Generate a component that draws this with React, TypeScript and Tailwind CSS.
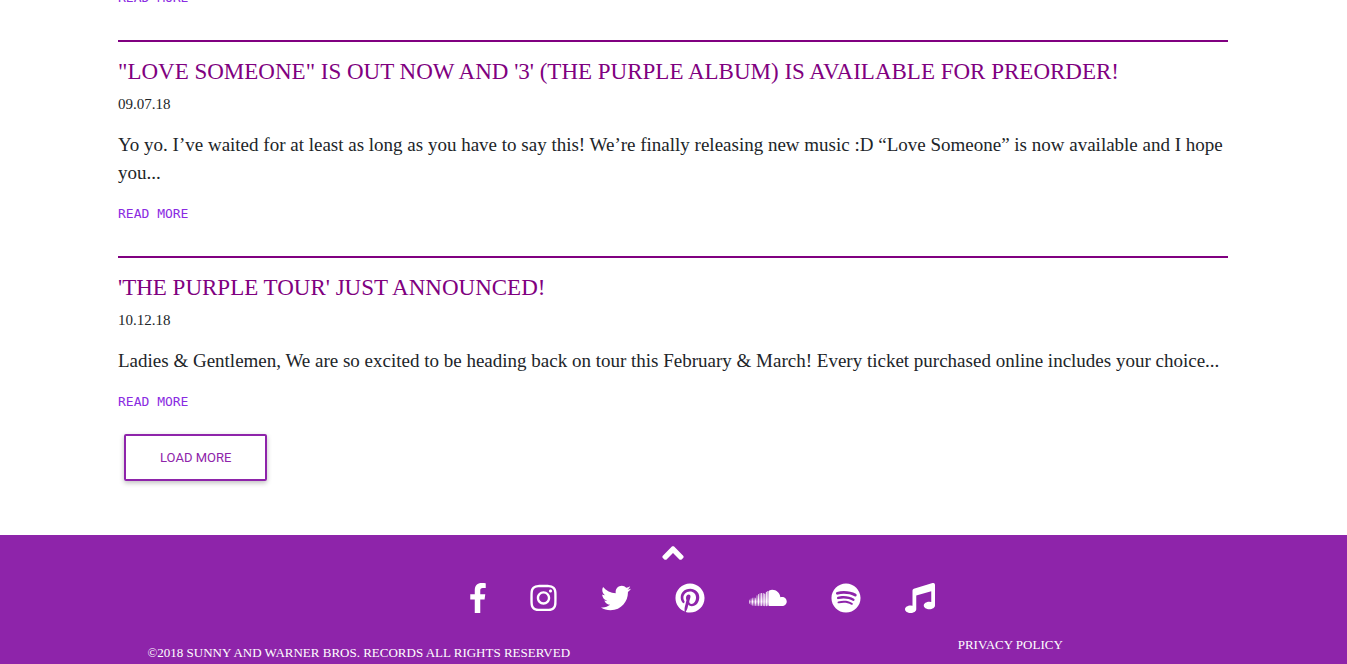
import { FaInstagram, FaTwitter, FaPinterest, FaSoundcloud, FaSpotify, FaMusic, FaAngleUp } from 'react-icons/fa';

type Post = { title: string; date: string; excerpt: string };

const posts: Post[] = [
  {
    title: `"LOVE SOMEONE" IS OUT NOW AND '3' (THE PURPLE ALBUM) IS AVAILABLE FOR PREORDER!`,
    date: '09.07.18',
    excerpt:
      'Yo yo. I’ve waited for at least as long as you have to say this! We’re finally releasing new music :D “Love Someone” is now available and I hope you...',
  },
  {
    title: `'THE PURPLE TOUR' JUST ANNOUNCED!`,
    date: '10.12.18',
    excerpt:
      'Ladies & Gentlemen, We are so excited to be heading back on tour this February & March! Every ticket purchased online includes your choice...',
  },
];

function FacebookIcon({ className }: { className?: string }) {
  return (
    <svg viewBox="0 0 264 512" fill="currentColor" className={className}>
      <path d="M76.7 512V283H0v-91h76.7v-71.7C76.7 42.4 124.3 0 193.8 0c33.3 0 61.9 2.5 70.2 3.6V85h-48.2c-37.8 0-45.1 18-45.1 44.3V192H256l-11.7 91h-73.6v229" />
    </svg>
  );
}

const socials = [
  { label: 'Facebook', Icon: FacebookIcon, size: 'h-[30px] w-4' },
  { label: 'Instagram', Icon: FaInstagram, size: 'h-[30px] w-[27px]' },
  { label: 'Twitter', Icon: FaTwitter, size: 'h-[30px] w-[30px]' },
  { label: 'Pinterest', Icon: FaPinterest, size: 'h-[30px] w-[30px]' },
  { label: 'SoundCloud', Icon: FaSoundcloud, size: 'h-[30px] w-[38px]' },
  { label: 'Spotify', Icon: FaSpotify, size: 'h-[30px] w-[30px]' },
  { label: 'Apple Music', Icon: FaMusic, size: 'h-[30px] w-[30px]' },
];

function ReadMore() {
  return (
    <a href="#" className="block font-['DejaVu_Sans_Mono',monospace] text-[13px] leading-[21px] text-[#8a2be2]">
      READ MORE
    </a>
  );
}

function NewsItem({ post }: { post: Post }) {
  return (
    <article className="mt-8 border-t-2 border-[#800080] pt-4">
      <h2 className="text-[23px] leading-7 text-[#800080]">{post.title}</h2>
      <p className="mt-[7px] text-[15px] leading-[22px]">{post.date}</p>
      <p className="my-4 text-[19px] leading-7">{post.excerpt}</p>
      <ReadMore />
    </article>
  );
}

export default function App() {
  return (
    <div className="h-screen overflow-hidden bg-white font-['Liberation_Serif',serif] text-[#212529]">
      <main className="mx-auto -mt-[13px] w-full max-w-[1111px] pr-px">
        <ReadMore />
        {posts.map((post) => (
          <NewsItem key={post.date} post={post} />
        ))}
        <button className="mt-[22px] ml-1.5 block rounded-xs border-2 border-[#8e24aa] px-[34px] py-3 font-[Roboto,sans-serif] text-[13px] leading-[19px] text-[#8e24aa] shadow-[0_2px_5px_rgba(0,0,0,0.25)]">
          LOAD MORE
        </button>
      </main>
      <footer className="mt-[54px] bg-[#8e24aa] pb-6 text-white">
        <div className="flex justify-center pt-px pr-0.5">
          <a href="#" aria-label="Back to top">
            <FaAngleUp className="h-[34px] w-[34px]" />
          </a>
        </div>
        <nav className="mt-[13px] flex justify-center gap-11 pl-[58px]">
          {socials.map(({ label, Icon, size }) => (
            <a key={label} href="#" aria-label={label}>
              <Icon className={size} />
            </a>
          ))}
        </nav>
        <div className="grid grid-cols-2 pt-[22px] text-center text-[13px] leading-5">
          <p className="pt-2 pl-11">©2018 SUNNY AND WARNER BROS. RECORDS ALL RIGHTS RESERVED</p>
          <p>
            <a href="#">PRIVACY POLICY</a>
          </p>
        </div>
      </footer>
    </div>
  );
}
